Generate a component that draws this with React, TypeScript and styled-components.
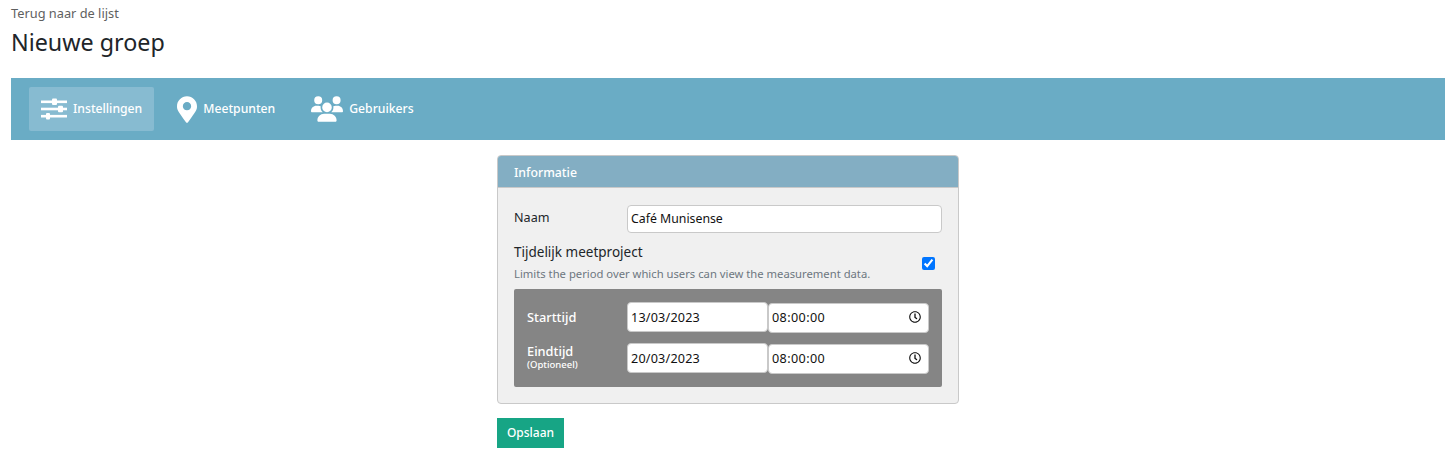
// App.tsx
import React from 'react';
import styled, { createGlobalStyle } from 'styled-components';
import { FaMapMarkerAlt, FaRegClock } from 'react-icons/fa';
import { FaUsers } from 'react-icons/fa6';

const FONT = `"Noto Sans", "Open Sans", "DejaVu Sans", sans-serif`;

const GlobalStyle = createGlobalStyle`
  html, body {
    margin: 0;
    padding: 0;
    background: #fff;
  }
  body {
    font-family: ${FONT};
    font-size: 13px;
    color: #212529;
  }
  * {
    box-sizing: border-box;
  }
`;

const Page = styled.div`
  padding: 5px 11px 0;
`;

const BackLink = styled.a`
  display: block;
  height: 16px;
  font-size: 12.8px;
  line-height: 16px;
  color: #5f5f5f;
`;

const Title = styled.h1`
  margin: 5px 0 0;
  height: 52px;
  font-size: 23.3px;
  line-height: 32px;
  font-weight: 400;
  color: #212529;
`;

const TabBar = styled.nav`
  display: flex;
  align-items: center;
  gap: 11px;
  height: 62px;
  padding: 0 18px;
  background: #6aacc5;
`;

const Tab = styled.a<{ $active?: boolean }>`
  display: flex;
  align-items: center;
  gap: 6px;
  height: 44px;
  padding: 0 12px;
  border-radius: 2px;
  font-size: 12.2px;
  font-weight: 500;
  color: #fff;
  background: ${p => (p.$active ? '#87bbd1' : 'transparent')};
`;

const TabLabel = styled.span`
  margin-top: -2px;
`;

const PinIcon = styled(FaMapMarkerAlt)`
  width: 20px;
  height: 27px;
  color: #fff;
`;

const UsersIcon = styled(FaUsers)`
  width: 32px;
  height: 26px;
  margin-left: 1px;
  color: #fff;
`;

const Card = styled.section`
  width: 462px;
  margin: 15px auto 0;
  border: 1px solid #c9c9c9;
  border-radius: 4px;
  background: #f0f0f0;
`;

const CardHeader = styled.header`
  height: 32px;
  padding: 0 16px;
  border-radius: 3px 3px 0 0;
  border-bottom: 1px solid #c9c9c9;
  background: #83aec3;
  font-size: 12.3px;
  font-weight: 500;
  line-height: 34px;
  color: #fff;
`;

const CardBody = styled.div`
  padding: 17px 16px 16px;
`;

const NameRow = styled.div`
  display: grid;
  grid-template-columns: 113px 1fr;
  align-items: center;
`;

const FieldLabel = styled.label`
  font-size: 12.6px;
  line-height: 20px;
  color: #212529;
  margin-top: -3px;
`;

const Field = styled.input`
  width: 100%;
  height: 28px;
  padding: 0 3px 1px;
  border: 1px solid #c9c9c9;
  border-radius: 4px;
  background: #fff;
  font-family: ${FONT};
  font-size: 12.3px;
  color: #111;
  outline: none;
`;

const ProjectRow = styled.div`
  display: flex;
  align-items: center;
  justify-content: space-between;
  height: 42px;
  margin-top: 8px;
`;

const ProjectName = styled.div`
  font-size: 13.5px;
  line-height: 20px;
  color: #212529;
`;

const ProjectHint = styled.div`
  margin-top: 4px;
  font-size: 11.25px;
  line-height: 16px;
  color: #6d7780;
`;

const Check = styled.input`
  width: 13px;
  height: 13px;
  margin: 2px 7px 0 0;
  accent-color: #0075ff;
`;

const TimePanel = styled.div`
  display: grid;
  grid-template-columns: 113px 141px 1fr;
  grid-auto-rows: 30px;
  align-items: center;
  row-gap: 11px;
  margin-top: 6px;
  padding: 13px 13px 14px 0;
  border-radius: 2px;
  background: #858585;
`;

const PanelLabel = styled.div`
  padding-left: 13px;
  font-size: 12.8px;
  font-weight: 500;
  line-height: 14px;
  color: #fff;
`;

const Optional = styled.small`
  display: block;
  margin-top: 1px;
  padding-bottom: 2px;
  font-size: 9.5px;
  line-height: 11px;
`;

const TimeBox = styled.div`
  display: flex;
  align-items: center;
  justify-content: space-between;
  height: 30px;
  margin-top: 2px;
  padding: 0 7px 2px 3px;
  border: 1px solid #c9c9c9;
  border-radius: 4px;
  background: #fff;
  font-size: 12.6px;
  letter-spacing: 0.4px;
  color: #111;
`;

const DateField = styled(Field)`
  height: 30px;
  padding: 0 3px;
  font-size: 12.6px;
  letter-spacing: 0.2px;
`;

const SaveButton = styled.button`
  display: block;
  width: 67px;
  height: 30px;
  margin: 0;
  padding: 0 0 2px;
  border: 0;
  background: #17a585;
  font-family: ${FONT};
  font-size: 12px;
  font-weight: 500;
  color: #fff;
`;

const Footer = styled.div`
  width: 462px;
  margin: 14px auto 0;
`;

const SlidersIcon = () => (
  <svg width="26" height="22" viewBox="0 0 26 22" fill="#fff" aria-hidden="true">
    <rect x="0" y="2.5" width="26" height="2.6" />
    <rect x="11" y="0.5" width="5" height="6.6" rx="1" />
    <rect x="0" y="9.7" width="26" height="2.6" />
    <rect x="17" y="7.7" width="5" height="6.6" rx="1" />
    <rect x="0" y="16.9" width="26" height="2.6" />
    <rect x="5" y="14.9" width="4" height="6.6" rx="1" />
  </svg>
);

const rows = [
  { label: 'Starttijd', date: '13/03/2023', time: '08:00:00' },
  { label: 'Eindtijd', optional: '(Optioneel)', date: '20/03/2023', time: '08:00:00' },
];

const App: React.FC = () => {
  return (
    <Page>
      <GlobalStyle />
      <BackLink>Terug naar de lijst</BackLink>
      <Title>Nieuwe groep</Title>
      <TabBar>
        <Tab $active>
          <SlidersIcon />
          <TabLabel>Instellingen</TabLabel>
        </Tab>
        <Tab>
          <PinIcon />
          <TabLabel>Meetpunten</TabLabel>
        </Tab>
        <Tab>
          <UsersIcon />
          <TabLabel>Gebruikers</TabLabel>
        </Tab>
      </TabBar>
      <Card>
        <CardHeader>Informatie</CardHeader>
        <CardBody>
          <NameRow>
            <FieldLabel>Naam</FieldLabel>
            <Field readOnly value="Café Munisense" />
          </NameRow>
          <ProjectRow>
            <div>
              <ProjectName>Tijdelijk meetproject</ProjectName>
              <ProjectHint>Limits the period over which users can view the measurement data.</ProjectHint>
            </div>
            <Check type="checkbox" readOnly checked />
          </ProjectRow>
          <TimePanel>
            {rows.map(row => (
              <React.Fragment key={row.label}>
                <PanelLabel>
                  {row.label}
                  {row.optional && <Optional>{row.optional}</Optional>}
                </PanelLabel>
                <DateField readOnly value={row.date} />
                <TimeBox>
                  {row.time}
                  <FaRegClock size={12} color="#111" />
                </TimeBox>
              </React.Fragment>
            ))}
          </TimePanel>
        </CardBody>
      </Card>
      <Footer>
        <SaveButton>Opslaan</SaveButton>
      </Footer>
    </Page>
  );
};

export default App;
